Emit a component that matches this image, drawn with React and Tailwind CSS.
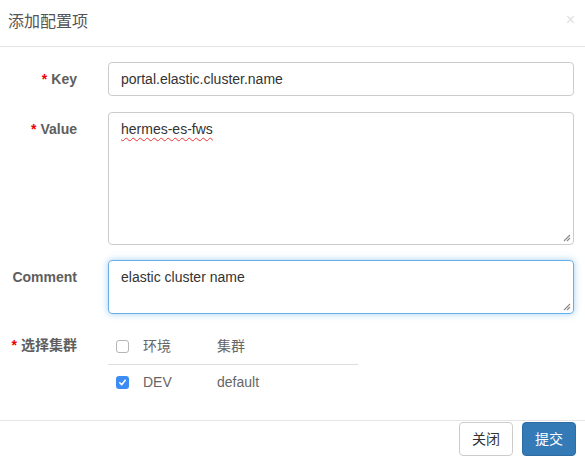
import React from 'react'

const font = { fontFamily: '"Liberation Sans", Arial, "Noto Sans CJK SC", sans-serif' }

function Grip() {
  return (
    <svg className="absolute right-[2px] bottom-[2px]" width="9" height="9" viewBox="0 0 9 9">
      <path d="M8 2 L2 8 M8 5 L5 8" stroke="#8a8a8a" strokeWidth="1.1" fill="none" />
    </svg>
  )
}

function Label({ required, children }) {
  return (
    <div className="w-[77px] shrink-0 pt-[7px] text-right text-[14px] font-bold text-[#5e5e5e] leading-[20px] whitespace-nowrap">
      {required && <span className="text-[#e00] mr-[4px]">*</span>}
      {children}
    </div>
  )
}

function Box({ checked }) {
  if (checked)
    return (
      <div className="w-[13px] h-[13px] rounded-[3px] bg-[#3c8cf4] flex items-center justify-center">
        <svg width="9" height="9" viewBox="0 0 9 9">
          <path d="M1.8 4.8 L3.7 6.7 L7.2 2.3" stroke="#fff" strokeWidth="1.6" fill="none" strokeLinecap="round" strokeLinejoin="round" />
        </svg>
      </div>
    )
  return <div className="w-[13px] h-[13px] rounded-[3px] border border-[#b5b5b5] bg-white" />
}

export default function App() {
  return (
    <div className="w-[585px] h-[460px] overflow-hidden bg-white text-[14px] text-[#444]" style={font}>
      <div className="h-[47px] border-b border-[#e5e5e5] flex items-center justify-between pl-[8px] pr-[10px]">
        <div className="text-[16px] text-[#555] pb-[2px]">添加配置项</div>
        <div className="text-[16px] text-[#ccc] opacity-60 leading-none pb-[6px]">×</div>
      </div>

      <div className="pt-[15px] pr-[11px] flex flex-col">
        <div className="flex gap-[31px]">
          <Label required>Key</Label>
          <div className="flex-1 h-[34px] border border-[#ccc] rounded-[4px] px-[12px] flex items-center text-[#333]">
            portal.elastic.cluster.name
          </div>
        </div>

        <div className="flex gap-[31px] mt-[16px]">
          <Label required>Value</Label>
          <div className="relative flex-1 h-[133px] border border-[#ccc] rounded-[4px] px-[12px] pt-[6px] text-[#333] leading-[20px]">
            <span className="underline decoration-wavy decoration-[#e33] decoration-1 underline-offset-[3px]">hermes-es-fws</span>
            <Grip />
          </div>
        </div>

        <div className="flex gap-[31px] mt-[15px]">
          <Label>Comment</Label>
          <div className="relative flex-1 h-[54px] border border-[#66afe9] rounded-[4px] px-[12px] pt-[6px] text-[#333] leading-[20px] shadow-[0_0_7px_rgba(102,175,233,0.6)]">
            elastic cluster name
            <Grip />
          </div>
        </div>

        <div className="flex gap-[31px] mt-[15px]">
          <div className="w-[77px] shrink-0 pt-[6px] text-right text-[14px] font-bold text-[#5e5e5e] leading-[20px] whitespace-nowrap">
            <span className="text-[#e00] mr-[4px]">*</span>选择集群
          </div>
          <div className="w-[250px]">
            <div className="flex items-center h-[36px] border-b border-[#ddd] pl-[8px] text-[#666]">
              <Box />
              <div className="w-[74px] ml-[14px]">环境</div>
              <div>集群</div>
            </div>
            <div className="flex items-center h-[34px] pl-[8px] text-[#666]">
              <Box checked />
              <div className="w-[74px] ml-[14px]">DEV</div>
              <div>default</div>
            </div>
          </div>
        </div>
      </div>

      <div className="mt-[21px] border-t border-[#e5e5e5] flex justify-end gap-[9px] pr-[9px] pt-[1px]">
        <div className="w-[54px] h-[34px] border border-[#ccc] rounded-[4px] flex items-center justify-center text-[#333]">关闭</div>
        <div className="w-[54px] h-[34px] border border-[#2e6da4] bg-[#337ab7] rounded-[4px] flex items-center justify-center text-white">提交</div>
      </div>
    </div>
  )
}
